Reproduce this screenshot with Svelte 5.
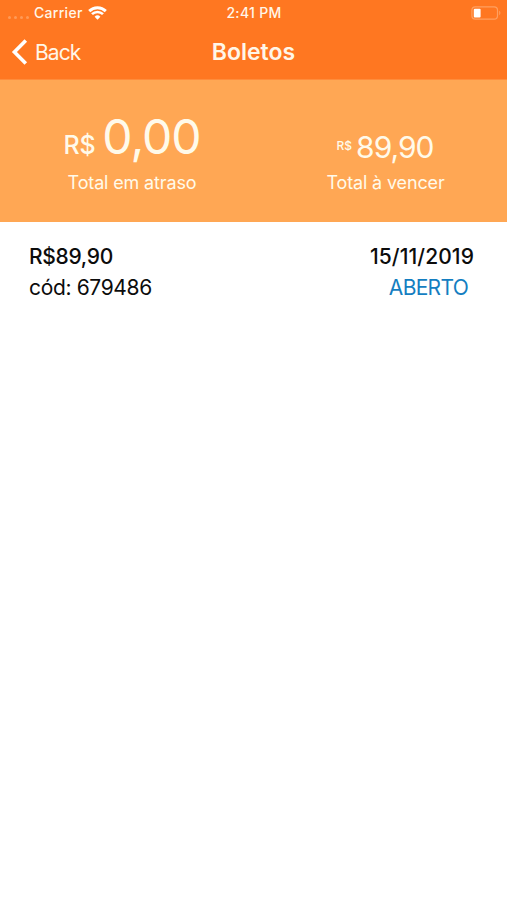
<script lang="ts">
  const title = "Boletos";

  const overdue = "0,00";
  const upcoming = "89,90";

  const boletos = [
    { code: "679486", value: "89,90", dueDate: "15/11/2019", status: "ABERTO" },
  ];
</script>

<div class="screen">
  <header class="top">
    <div class="status-bar">
      <div class="carrier">
        <span class="signal"><i></i><i></i><i></i><i></i></span>
        <span class="carrier-name">Carrier</span>
        <svg class="wifi" width="19" height="14" viewBox="0 0 19 14" fill="none">
          <path d="M1.2 5.1a11.8 11.8 0 0 1 16.6 0" stroke="#fff" stroke-width="2.9" />
          <path d="M4 8.2a7.8 7.8 0 0 1 11 0" stroke="#fff" stroke-width="2.6" />
          <path d="M6.6 10.7a4.1 4.1 0 0 1 5.8 0L9.5 13.7z" fill="#fff" />
        </svg>
      </div>
      <span class="time">2:41 PM</span>
      <div class="battery">
        <svg width="30" height="14" viewBox="0 0 30 14" fill="none">
          <rect x="0.9" y="0.9" width="25.6" height="12.2" rx="3.4" stroke="#ffa060" stroke-width="1.2" />
          <rect x="2.8" y="2.8" width="6.8" height="8.6" rx="1" fill="#fff" />
          <path d="M28.2 4.8v4.4c1.6-.6 1.6-3.8 0-4.4z" fill="#ffa060" />
        </svg>
      </div>
    </div>

    <nav class="nav-bar">
      <button class="back">
        <svg width="17" height="28" viewBox="0 0 17 28" fill="none">
          <path d="M14.8 2.4 3.4 14l11.4 11.6" stroke="#fff" stroke-width="3.6" />
        </svg>
        <span>Back</span>
      </button>
      <h1>{title}</h1>
    </nav>
  </header>

  <section class="totals">
    <div class="total overdue">
      <div class="amount"><small>R$</small><strong>{overdue}</strong></div>
      <div class="label">Total em atraso</div>
    </div>
    <div class="total upcoming">
      <div class="amount"><small>R$</small><strong>{upcoming}</strong></div>
      <div class="label">Total à vencer</div>
    </div>
  </section>

  <ul class="list">
    {#each boletos as boleto}
      <li>
        <div class="left">
          <span class="value">R${boleto.value}</span>
          <span class="code">cód: {boleto.code}</span>
        </div>
        <div class="right">
          <span class="date">{boleto.dueDate}</span>
          <span class="status">{boleto.status}</span>
        </div>
      </li>
    {/each}
  </ul>
</div>

<style>
  :global(body) {
    background: #fff;
  }

  .screen {
    height: 900px;
    overflow: hidden;
    font-family: Inter, "Liberation Sans", sans-serif;
    color: #0c0c0c;
    background: #fff;
  }

  .top {
    height: 79px;
    background: #ff7721;
    border-bottom: 1px solid #ff8c3b;
    color: #fff6e8;
  }

  .status-bar {
    display: grid;
    grid-template-columns: 1fr auto 1fr;
    align-items: center;
    height: 26px;
    padding: 0 6px 0 8px;
    font-size: 14px;
    font-weight: 500;
  }

  .carrier {
    display: flex;
    align-items: center;
  }

  .carrier-name,
  .time {
    padding-bottom: 1px;
    letter-spacing: 0.3px;
  }

  .time {
    margin-right: 1px;
  }

  .signal {
    display: flex;
    gap: 3px;
    width: 26px;
    padding-top: 9px;
  }

  .signal i {
    width: 3px;
    height: 3px;
    border-radius: 50%;
    background: #ff9a57;
  }

  .wifi {
    margin-left: 5px;
  }

  .battery {
    display: flex;
    justify-content: flex-end;
  }

  .nav-bar {
    display: grid;
    grid-template-columns: 1fr auto 1fr;
    align-items: center;
    height: 52px;
  }

  .back {
    display: flex;
    align-items: center;
    gap: 7px;
    padding: 0 0 0 11px;
    border: none;
    background: none;
    color: inherit;
    font: inherit;
    font-size: 21px;
    letter-spacing: -0.9px;
  }

  h1 {
    margin: 0;
    font-size: 23px;
    font-weight: 600;
  }

  .totals {
    display: grid;
    grid-template-columns: 264px 1fr;
    height: 142px;
    background: #ffa754;
    color: #fffaea;
  }

  .total {
    display: flex;
    flex-direction: column;
    align-items: center;
  }

  .amount {
    display: flex;
    align-items: baseline;
    height: 91px;
  }

  .amount strong {
    font-weight: 400;
    letter-spacing: -1px;
  }

  .overdue strong {
    font-size: 48px;
    line-height: 114px;
  }

  .overdue small {
    margin-right: 7px;
    font-size: 25px;
    font-weight: 500;
    letter-spacing: -0.2px;
  }

  .upcoming .amount {
    align-items: flex-start;
    margin-right: 1px;
  }

  .upcoming strong {
    font-size: 30px;
    line-height: 135px;
  }

  .upcoming small {
    margin-right: 4px;
    font-size: 12px;
    font-weight: 500;
    line-height: 131px;
  }

  .label {
    font-size: 18px;
    line-height: 24px;
    letter-spacing: -0.15px;
  }

  .list {
    margin: 0;
    padding: 0;
    list-style: none;
  }

  li {
    display: flex;
    justify-content: space-between;
    padding: 19px 33px 0 29px;
    font-size: 21px;
    line-height: 31px;
  }

  .left,
  .right {
    display: flex;
    flex-direction: column;
  }

  .right {
    align-items: flex-end;
  }

  .value,
  .date {
    font-weight: 500;
  }

  .value {
    letter-spacing: -0.3px;
  }

  .date {
    letter-spacing: 0.1px;
  }

  .code {
    letter-spacing: -0.35px;
  }

  .status {
    margin-right: 6px;
    color: #147ec1;
    letter-spacing: -0.7px;
  }
</style>
